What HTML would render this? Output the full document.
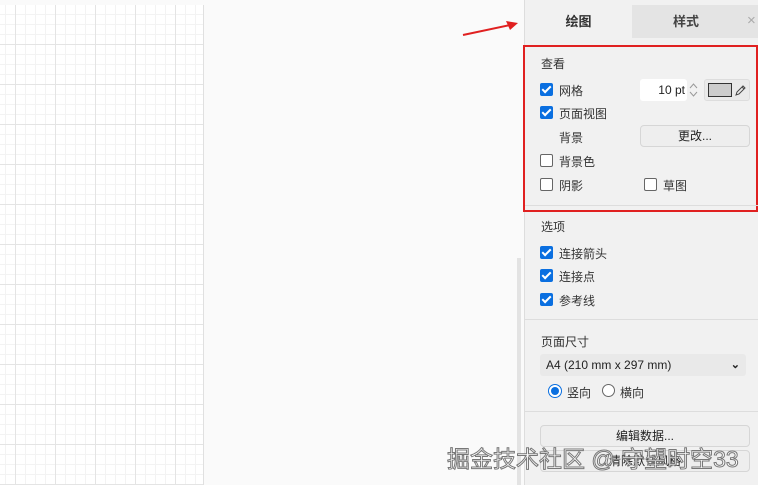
<!DOCTYPE html>
<html><head><meta charset="utf-8"><style>
*{margin:0;padding:0;box-sizing:border-box}
body{width:758px;height:485px;overflow:hidden;background:#fafafa;font-family:"Liberation Sans","Noto Sans CJK SC",sans-serif;font-size:12px;color:#333;position:relative}
.a{position:absolute}
.page{left:0;top:5px;width:204px;height:480px;background-color:#fff;
background-image:linear-gradient(#e4e4e4 1px,transparent 1px),linear-gradient(90deg,#e4e4e4 1px,transparent 1px),linear-gradient(#f3f3f3 1px,transparent 1px),linear-gradient(90deg,#f3f3f3 1px,transparent 1px);
background-size:40px 40px,40px 40px,10px 10px,10px 10px;background-position:0 -1px,15px 0,0 -1px,5px 0;border-right:1px solid #e0e0e0}
.panel{left:524px;top:0;width:234px;height:485px;background:#f1f1f1;border-left:1px solid #ddd}
.cb{position:absolute;width:13px;height:13px;border-radius:2px}
.on{background:#0a6fe0}
.on:after{content:"";position:absolute;left:4px;top:1px;width:3px;height:7px;border:solid #fff;border-width:0 2px 2px 0;transform:rotate(45deg)}
.off{border:1px solid #666;background:#fff}
.t{position:absolute;font-size:12px;color:#333}
.h{position:absolute;font-size:12px;color:#333}
.sep{position:absolute;left:525px;width:233px;height:1px;background:#ddd}
.btn{position:absolute;background:#eee;border:1px solid #d6d6d6;border-radius:4px;text-align:center;font-size:12px;color:#222}
</style></head><body>
<div class="a page"></div>
<div class="a" style="left:517px;top:258px;width:4px;height:227px;background:#e3e3e3"></div>
<div class="a panel"></div>
<div class="a" style="left:525px;top:5px;width:107px;height:33px;background:#f1f1f1;text-align:center;line-height:33px;font-weight:bold;font-size:13px">绘图</div>
<div class="a" style="left:632px;top:5px;width:108px;height:33px;background:#e4e4e4;text-align:center;line-height:33px;font-weight:bold;font-size:13px;color:#444">样式</div>
<div class="a" style="left:740px;top:5px;width:18px;height:33px;background:#e4e4e4;color:#aaa;font-size:15px;line-height:31px;padding-left:7px">×</div>
<svg class="a" style="left:460px;top:18px" width="64" height="22"><path d="M3 17 L50 7" stroke="#e02020" stroke-width="2"/><path d="M58 5 L46 3 L50 12 Z" fill="#e02020"/></svg>
<div class="a" style="left:523px;top:45px;width:235px;height:167px;border:2px solid #e02020"></div>
<div class="h" style="left:541px;top:55px">查看</div>
<div class="cb on" style="left:540px;top:83px"></div><div class="t" style="left:559px;top:82px">网格</div>
<div class="a" style="left:640px;top:79px;width:47px;height:22px;background:#fff;border-radius:3px;text-align:right;padding-right:2px;line-height:22px;font-size:12px;color:#222">10 pt</div>
<svg class="a" style="left:688px;top:81px" width="11" height="18"><path d="M2 7 L5.5 3 L9 7 M2 11 L5.5 15 L9 11" stroke="#999" fill="none"/></svg>
<div class="a" style="left:704px;top:79px;width:46px;height:22px;background:#eaeaea;border:1px solid #ddd;border-radius:3px"></div>
<div class="a" style="left:708px;top:83px;width:24px;height:14px;background:#ccc;border:1px solid #333"></div>
<svg class="a" style="left:734px;top:83px" width="14" height="14"><path d="M2 12 L3 9 L9 3 L11 5 L5 11 Z M8 4 L10 6" stroke="#444" fill="none"/></svg>
<div class="cb on" style="left:540px;top:106px"></div><div class="t" style="left:559px;top:105px">页面视图</div>
<div class="t" style="left:559px;top:129px">背景</div>
<div class="btn" style="left:640px;top:125px;width:110px;height:22px;line-height:20px">更改...</div>
<div class="cb off" style="left:540px;top:154px"></div><div class="t" style="left:559px;top:153px">背景色</div>
<div class="cb off" style="left:540px;top:178px"></div><div class="t" style="left:559px;top:177px">阴影</div>
<div class="cb off" style="left:644px;top:178px"></div><div class="t" style="left:663px;top:177px">草图</div>
<div class="sep" style="top:205px"></div>
<div class="h" style="left:541px;top:218px">选项</div>
<div class="cb on" style="left:540px;top:246px"></div><div class="t" style="left:559px;top:245px">连接箭头</div>
<div class="cb on" style="left:540px;top:269px"></div><div class="t" style="left:559px;top:268px">连接点</div>
<div class="cb on" style="left:540px;top:293px"></div><div class="t" style="left:559px;top:292px">参考线</div>
<div class="sep" style="top:319px"></div>
<div class="h" style="left:541px;top:333px">页面尺寸</div>
<div class="a" style="left:540px;top:354px;width:206px;height:22px;background:#e9e9e9;border-radius:3px;line-height:22px;padding-left:6px;font-size:12px;color:#222">A4 (210 mm x 297 mm)<span style="position:absolute;right:6px;top:0;font-weight:bold;font-size:11px">⌄</span></div>
<div class="a" style="left:548px;top:384px;width:14px;height:14px;border-radius:50%;border:1px solid #0a6fe0;background:#fff"><div style="margin:2px;width:8px;height:8px;border-radius:50%;background:#0a6fe0"></div></div>
<div class="t" style="left:567px;top:384px">竖向</div>
<div class="a" style="left:602px;top:384px;width:13px;height:13px;border-radius:50%;border:1px solid #666;background:#fff"></div>
<div class="t" style="left:620px;top:384px">横向</div>
<div class="sep" style="top:411px"></div>
<div class="btn" style="left:540px;top:425px;width:210px;height:22px;line-height:20px">编辑数据...</div>
<div class="btn" style="left:540px;top:450px;width:210px;height:22px;line-height:20px">清除默认风格</div>
<div class="a" style="left:447px;top:440px;font-size:23px;color:#fff;-webkit-text-stroke:1px #777;white-space:nowrap">掘金技术社区 @ 守望时空33</div>
</body></html>
